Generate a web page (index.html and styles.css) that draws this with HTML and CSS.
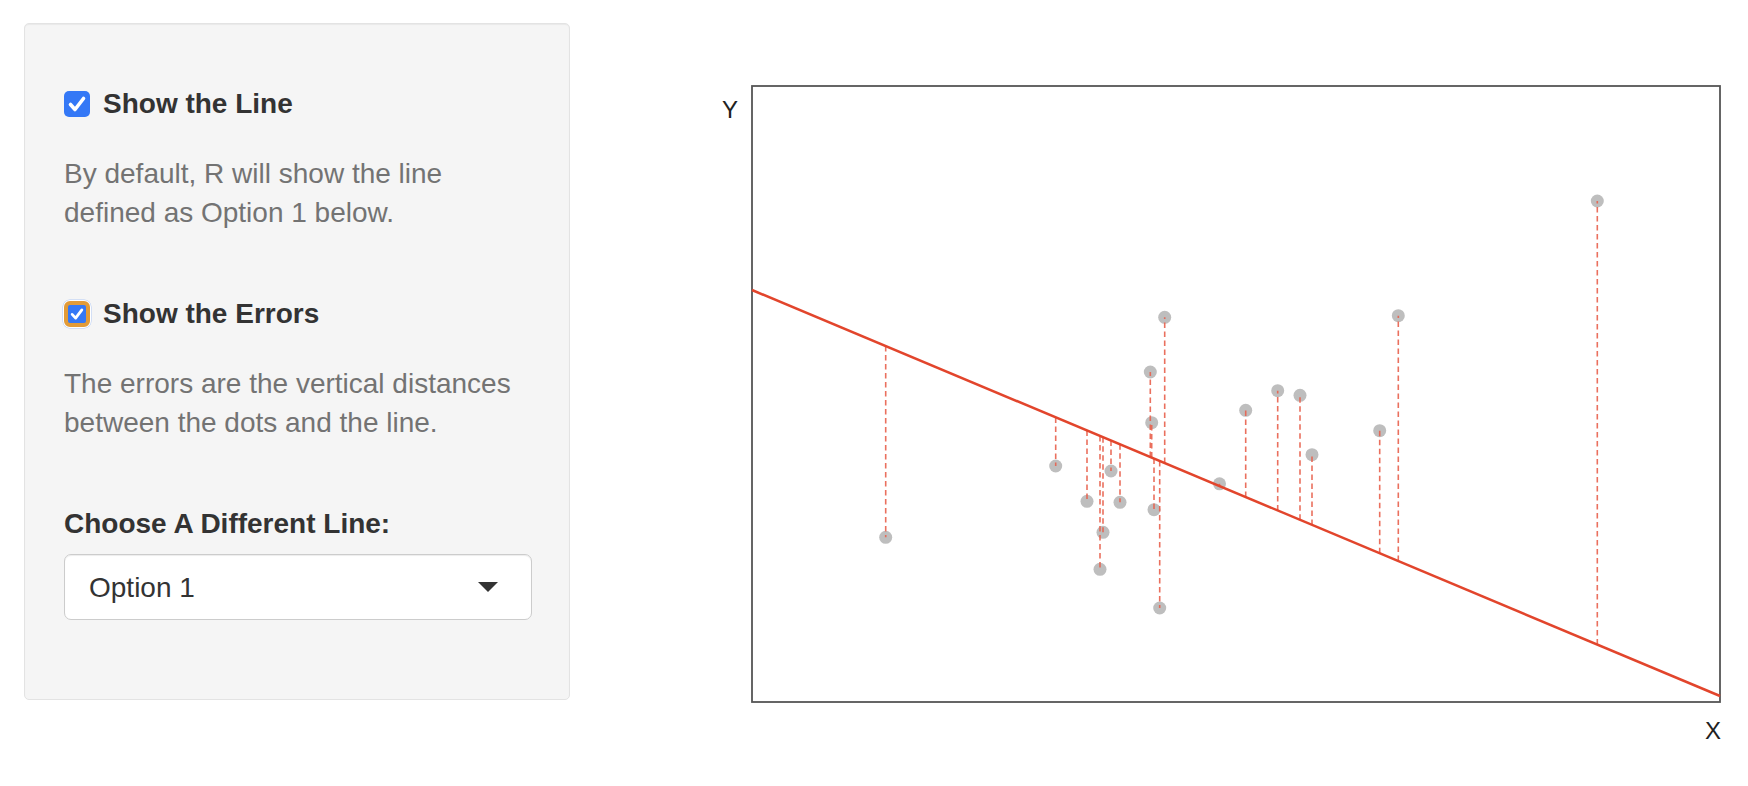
FILE: index.html
```html
<!DOCTYPE html>
<html lang="en">
  <head>
    <meta charset="UTF-8" />
    <meta name="viewport" content="width=device-width, initial-scale=1.0" />
    <title>Least Squares Line</title>
    <link rel="stylesheet" href="styles.css">
  </head>
  <body>
    <main class="page">
      <!-- Controls -->
      <section class="well">
        <label class="checkbox">
          <span class="box">
            <svg viewBox="0 0 26 26"><path d="M6.5 13.5 L11 18.5 L19.5 7.5" /></svg>
          </span>
          <span>Show the Line</span>
        </label>
        <p class="help">By default, R will show the line defined as Option 1 below.</p>

        <label class="checkbox spaced">
          <span class="box focused">
            <svg viewBox="0 0 26 26"><path d="M6 13.5 L11 19 L20 7" /></svg>
          </span>
          <span>Show the Errors</span>
        </label>
        <p class="help">The errors are the vertical distances between the dots and the line.</p>

        <div class="control-label">Choose A Different Line:</div>
        <div class="select">
          <span>Option 1</span>
          <span class="caret"></span>
        </div>
      </section>

      <!-- Plot -->
      <section class="plot">
        <svg width="1068" height="740" viewBox="680 23 1068 740">
          <text class="axis-label" x="730" y="118" text-anchor="middle">Y</text>
          <text class="axis-label" x="1721" y="739" text-anchor="end">X</text>

          <rect class="frame" x="752" y="86" width="968" height="616" />

          <g class="dots">
            <circle cx="885.7" cy="537.3" r="6.5" />
            <circle cx="1055.7" cy="466" r="6.5" />
            <circle cx="1087" cy="501.3" r="6.5" />
            <circle cx="1100" cy="569.3" r="6.5" />
            <circle cx="1103" cy="532.3" r="6.5" />
            <circle cx="1111" cy="471" r="6.5" />
            <circle cx="1120" cy="502.3" r="6.5" />
            <circle cx="1150.3" cy="372" r="6.5" />
            <circle cx="1151.7" cy="422.7" r="6.5" />
            <circle cx="1154" cy="509.7" r="6.5" />
            <circle cx="1159.7" cy="608" r="6.5" />
            <circle cx="1164.7" cy="317.3" r="6.5" />
            <circle cx="1219.5" cy="483.8" r="6.5" />
            <circle cx="1245.7" cy="410.3" r="6.5" />
            <circle cx="1277.7" cy="390.7" r="6.5" />
            <circle cx="1300" cy="395.3" r="6.5" />
            <circle cx="1312" cy="454.7" r="6.5" />
            <circle cx="1379.7" cy="430.7" r="6.5" />
            <circle cx="1398.3" cy="315.7" r="6.5" />
            <circle cx="1597.3" cy="201" r="6.5" />
          </g>

          <!-- errors: from each dot to the line -->
          <g class="errors">
            <line x1="885.7" y1="346.1" x2="885.7" y2="537.3" />
            <line x1="1055.7" y1="417.4" x2="1055.7" y2="466" />
            <line x1="1087" y1="430.5" x2="1087" y2="501.3" />
            <line x1="1100" y1="436" x2="1100" y2="569.3" />
            <line x1="1103" y1="437.2" x2="1103" y2="532.3" />
            <line x1="1111" y1="440.6" x2="1111" y2="471" />
            <line x1="1120" y1="444.3" x2="1120" y2="502.3" />
            <line x1="1150.3" y1="457.1" x2="1150.3" y2="372" />
            <line x1="1151.7" y1="457.6" x2="1151.7" y2="422.7" />
            <line x1="1154" y1="458.6" x2="1154" y2="509.7" />
            <line x1="1159.7" y1="461" x2="1159.7" y2="608" />
            <line x1="1164.7" y1="463.1" x2="1164.7" y2="317.3" />
            <line x1="1219.5" y1="486.1" x2="1219.5" y2="483.8" />
            <line x1="1245.7" y1="497.1" x2="1245.7" y2="410.3" />
            <line x1="1277.7" y1="510.5" x2="1277.7" y2="390.7" />
            <line x1="1300" y1="519.8" x2="1300" y2="395.3" />
            <line x1="1312" y1="524.9" x2="1312" y2="454.7" />
            <line x1="1379.7" y1="553.3" x2="1379.7" y2="430.7" />
            <line x1="1398.3" y1="561.1" x2="1398.3" y2="315.7" />
            <line x1="1597.3" y1="644.5" x2="1597.3" y2="201" />
          </g>

          <line class="fit" x1="752" y1="290" x2="1720" y2="696" />
        </svg>
      </section>
    </main>
  </body>
</html>
```

FILE: styles.css
```css
* {
  box-sizing: border-box;
}

body {
  margin: 0;
  font-family: "Liberation Sans", Helvetica, Arial, sans-serif;
  font-size: 28px;
  line-height: 39px;
  color: #333;
  background: #fff;
}

.page {
  display: flex;
  align-items: flex-start;
  padding: 23px 0 0 24px;
}

/* Sidebar panel */
.well {
  width: 546px;
  padding: 60px 37px 79px 39px;
  background-color: #f5f5f5;
  border: 1px solid #e3e3e3;
  border-radius: 5px;
  box-shadow: inset 0 1px 1px rgba(0, 0, 0, 0.05);
}

.checkbox {
  display: flex;
  align-items: center;
  gap: 13px;
  height: 39px;
  font-weight: bold;
  color: #333;
}

.checkbox.spaced {
  margin-top: 62px;
}

.box {
  display: inline-flex;
  width: 26px;
  height: 26px;
  border-radius: 5px;
  background-color: #3478f6;
}

.box svg {
  width: 100%;
  height: 100%;
}

.box path {
  fill: none;
  stroke: #fff;
  stroke-width: 3.6;
  stroke-linecap: round;
  stroke-linejoin: round;
}

.box.focused {
  border: 4px solid #e29b38;
  border-radius: 6px;
  box-shadow: 0 0 0 1px #fff, 0 0 0 1.5px rgba(52, 120, 246, 0.35);
}

.box.focused path {
  stroke-width: 4;
}

.help {
  margin: 31px 0 0;
  color: #737373;
}

.control-label {
  margin-top: 62px;
  font-weight: bold;
  color: #333;
}

/* Select box */
.select {
  display: flex;
  align-items: center;
  justify-content: space-between;
  height: 66px;
  margin-top: 11px;
  padding: 0 33px 0 24px;
  background-color: #fff;
  border: 1px solid #cccccc;
  border-radius: 7px;
  box-shadow: inset 0 1px 1px rgba(0, 0, 0, 0.075);
  color: #333;
}

.caret {
  width: 0;
  height: 0;
  border-style: solid;
  border-width: 10px 10px 0 10px;
  border-color: #333 transparent transparent transparent;
}

/* Plot */
.plot {
  margin-left: 110px;
}

.plot svg {
  display: block;
}

.axis-label {
  font-family: "Liberation Sans", Helvetica, Arial, sans-serif;
  font-size: 24px;
  fill: #222;
}

.frame {
  fill: none;
  stroke: #555;
  stroke-width: 1.8;
}

.dots circle {
  fill: #bebebe;
}

.errors line {
  stroke: #e8604c;
  stroke-opacity: 0.9;
  stroke-width: 1.6;
  stroke-dasharray: 5.5 3.5;
}

.fit {
  stroke: #e2452c;
  stroke-width: 2.5;
}
```
